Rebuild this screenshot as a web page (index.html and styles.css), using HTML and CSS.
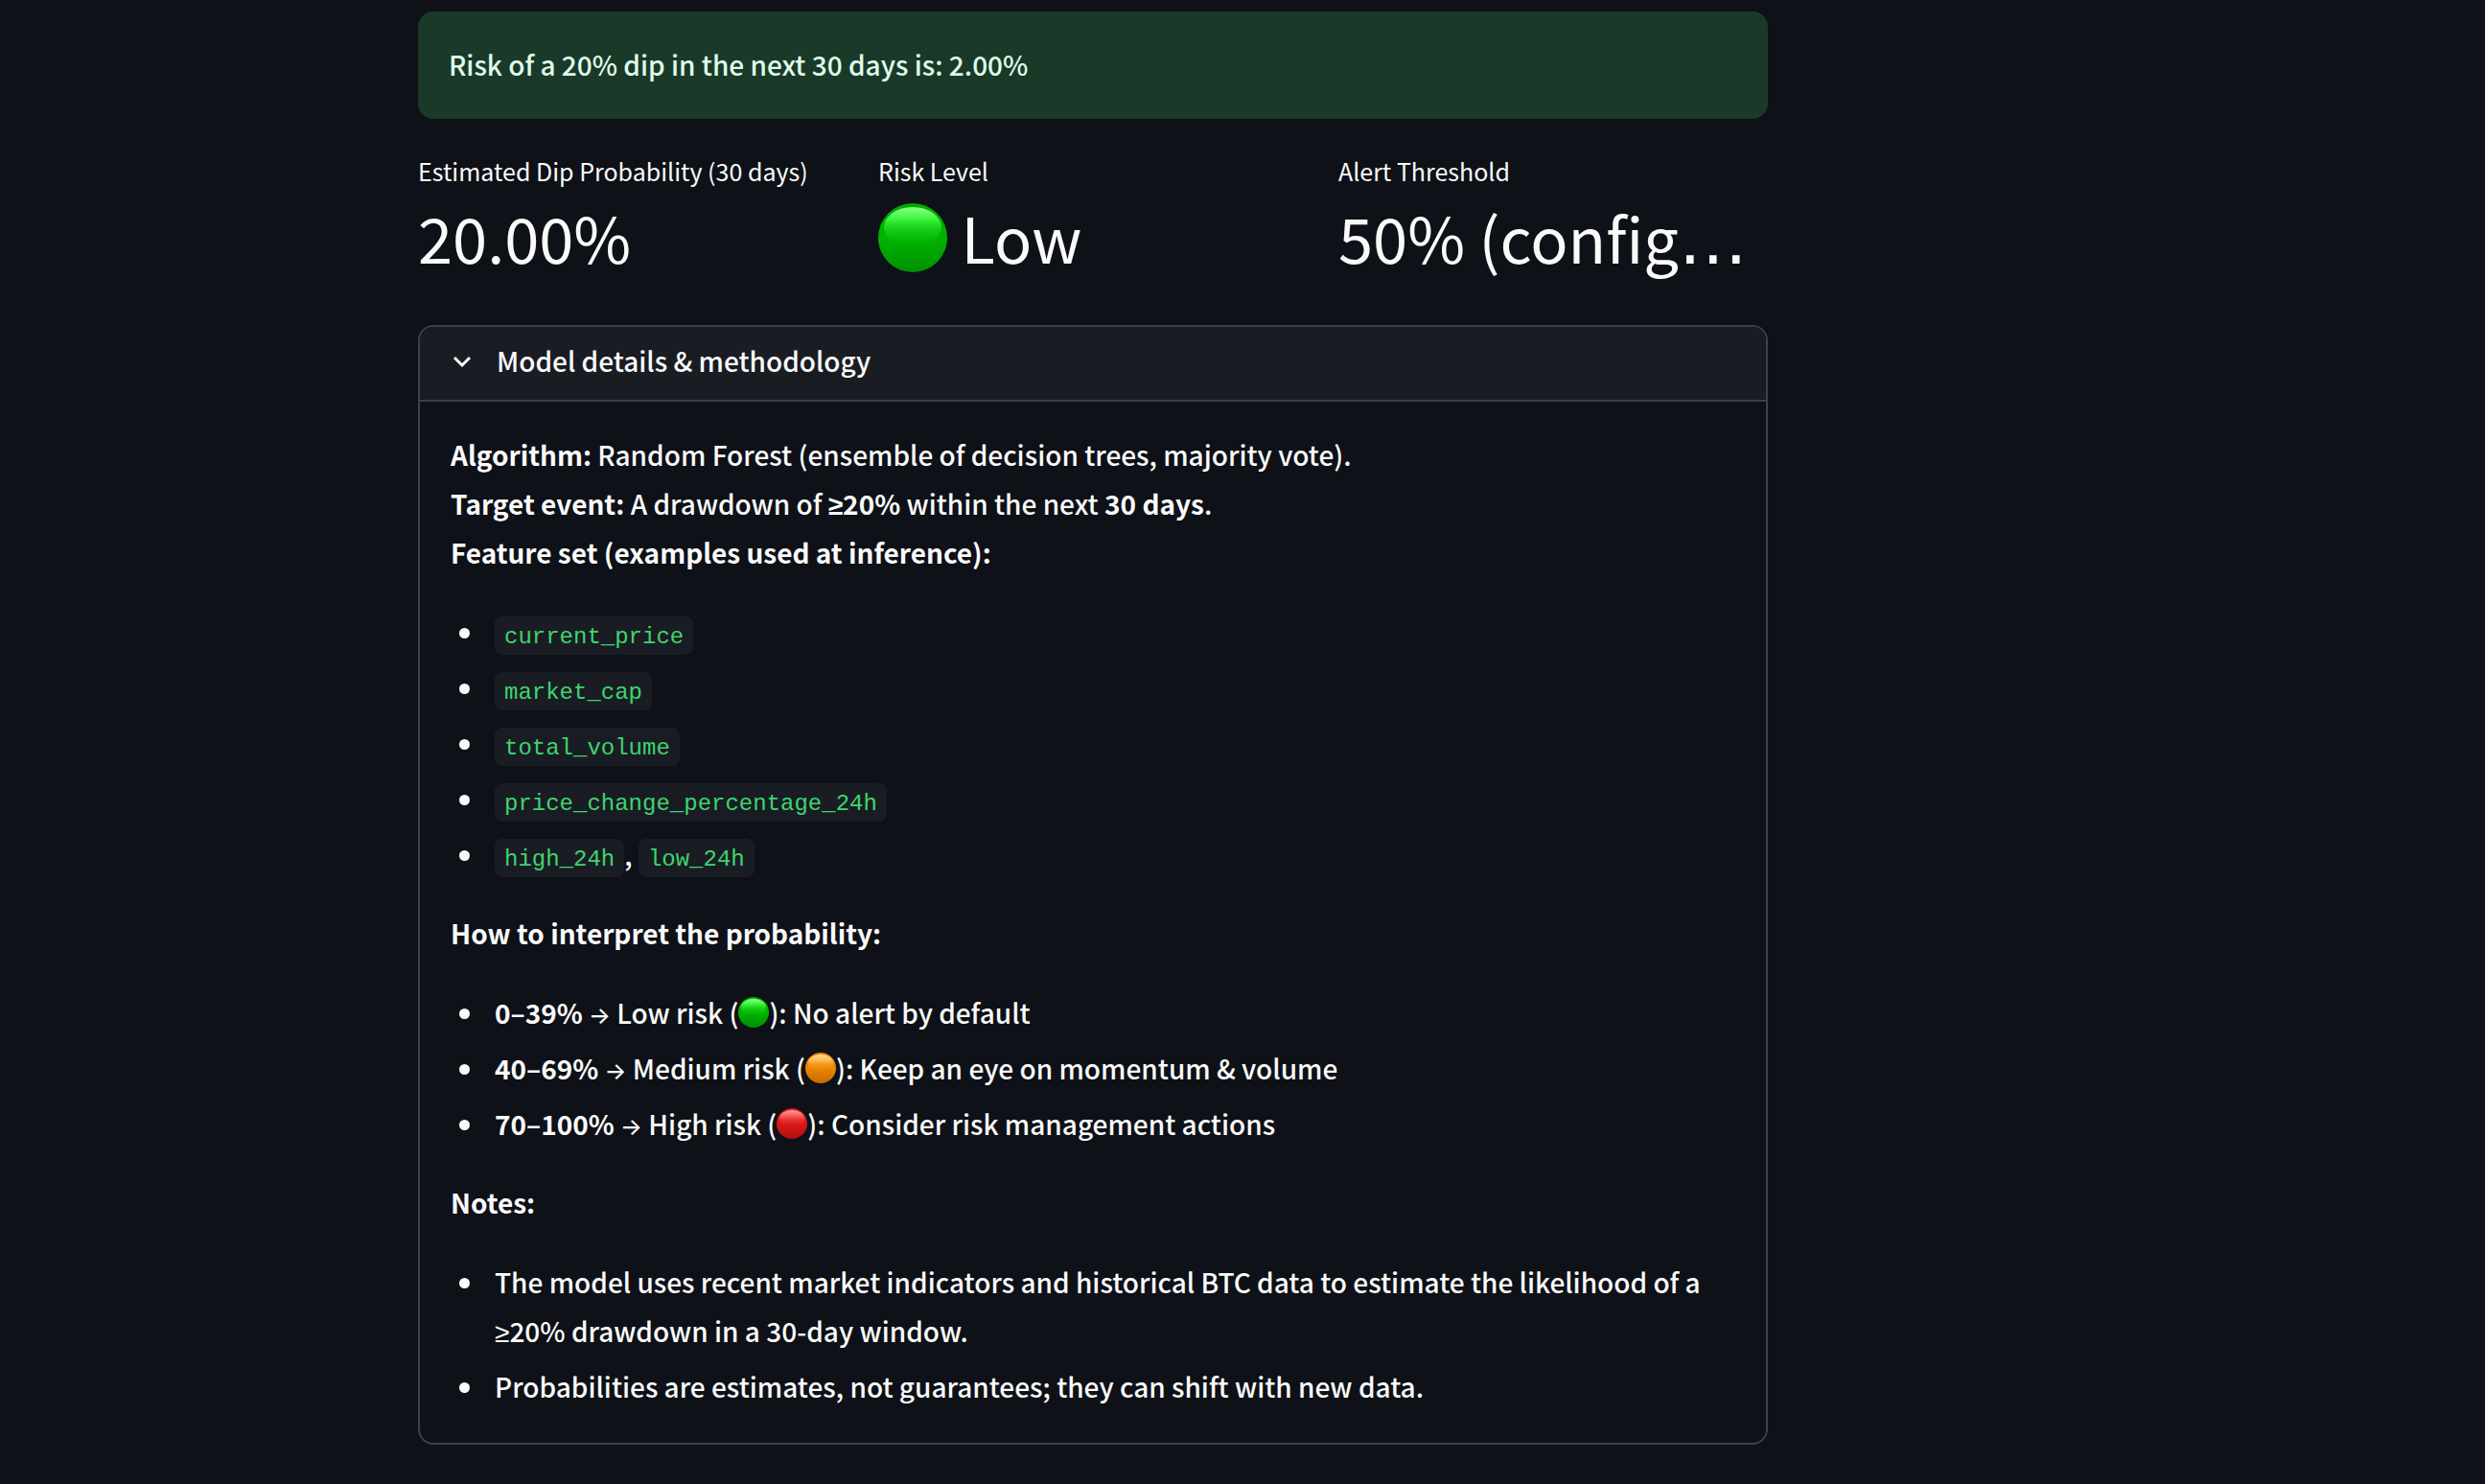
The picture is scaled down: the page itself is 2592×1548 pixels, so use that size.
FILE: index.html
```html
<!DOCTYPE html>
<html lang="en">
<head>
<meta charset="utf-8">
<title>BTC Dip Risk</title>
<meta name="viewport" content="width=device-width, initial-scale=1">
<link rel="stylesheet" href="styles.css">
</head>
<body>
<svg class="defs" aria-hidden="true">
  <defs>
    <linearGradient id="green-base" x1="0" y1="0" x2="0" y2="1"><stop offset="0" stop-color="#00a800"/><stop offset=".5" stop-color="#00b400"/><stop offset="1" stop-color="#008f00"/></linearGradient>
    <linearGradient id="green-shine" x1="0" y1="0" x2="0" y2="1"><stop offset="0" stop-color="#8cff8c"/><stop offset=".3" stop-color="#3cf53c"/><stop offset="1" stop-color="#00b400" stop-opacity="0"/></linearGradient>
    <linearGradient id="orange-base" x1="0" y1="0" x2="0" y2="1"><stop offset="0" stop-color="#e08200"/><stop offset=".5" stop-color="#ea8600"/><stop offset="1" stop-color="#cc6a00"/></linearGradient>
    <linearGradient id="orange-shine" x1="0" y1="0" x2="0" y2="1"><stop offset="0" stop-color="#ffd898"/><stop offset=".3" stop-color="#ffbc58"/><stop offset="1" stop-color="#ea8600" stop-opacity="0"/></linearGradient>
    <linearGradient id="red-base" x1="0" y1="0" x2="0" y2="1"><stop offset="0" stop-color="#c81414"/><stop offset=".5" stop-color="#dc1616"/><stop offset="1" stop-color="#b01010"/></linearGradient>
    <linearGradient id="red-shine" x1="0" y1="0" x2="0" y2="1"><stop offset="0" stop-color="#ff9c9c"/><stop offset=".3" stop-color="#fa6464"/><stop offset="1" stop-color="#dc1616" stop-opacity="0"/></linearGradient>
  </defs>
</svg>
<main class="page">
  <div class="block">
    <div class="alert" role="alert">Risk of a 20% dip in the next 30 days is: 2.00%</div>

    <section class="metrics">
      <div class="metric">
        <div class="metric-label">Estimated Dip Probability (30 days)</div>
        <div class="metric-value">20.00%</div>
      </div>
      <div class="metric">
        <div class="metric-label">Risk Level</div>
        <div class="metric-value"><svg class="dot dot-large" viewBox="0 0 72 72" role="img" aria-label="green"><circle cx="36" cy="36" r="36" fill="url(#green-base)"/><ellipse cx="36" cy="25" rx="30" ry="21" fill="url(#green-shine)"/></svg> Low</div>
      </div>
      <div class="metric">
        <div class="metric-label">Alert Threshold</div>
        <div class="metric-value">50% (config<span class="ellipsis">…</span></div>
      </div>
    </section>

    <details class="expander" open>
      <summary class="expander-head">
        <svg class="chevron" viewBox="0 0 24 24" aria-hidden="true"><path d="M4 8l8 8 8-8"/></svg>
        <span>Model details &amp; methodology</span>
      </summary>
      <div class="expander-body">
        <p><strong>Algorithm:</strong> Random Forest (ensemble of decision trees, majority vote).<br>
        <strong>Target event:</strong> A drawdown of <strong><span class="sign">≥</span>20%</strong> within the next <strong>30 days</strong>.<br>
        <strong>Feature set (examples used at inference):</strong></p>
        <ul>
          <li><code>current_price</code></li>
          <li><code>market_cap</code></li>
          <li><code>total_volume</code></li>
          <li><code>price_change_percentage_24h</code></li>
          <li><code>high_24h</code>, <code>low_24h</code></li>
        </ul>
        <p><strong>How to interpret the probability:</strong></p>
        <ul>
          <li><strong>0–39%</strong> <span class="arrow">→</span> Low risk (<svg class="dot" viewBox="0 0 72 72" role="img" aria-label="green"><circle cx="36" cy="36" r="36" fill="url(#green-base)"/><ellipse cx="36" cy="25" rx="30" ry="21" fill="url(#green-shine)"/></svg>): No alert by default</li>
          <li><strong>40–69%</strong> <span class="arrow">→</span> Medium risk (<svg class="dot" viewBox="0 0 72 72" role="img" aria-label="orange"><circle cx="36" cy="36" r="36" fill="url(#orange-base)"/><ellipse cx="36" cy="25" rx="30" ry="21" fill="url(#orange-shine)"/></svg>): Keep an eye on momentum &amp; volume</li>
          <li><strong>70–100%</strong> <span class="arrow">→</span> High risk (<svg class="dot" viewBox="0 0 72 72" role="img" aria-label="red"><circle cx="36" cy="36" r="36" fill="url(#red-base)"/><ellipse cx="36" cy="25" rx="30" ry="21" fill="url(#red-shine)"/></svg>): Consider risk management actions</li>
        </ul>
        <p><strong>Notes:</strong></p>
        <ul>
          <li>The model uses recent market indicators and historical BTC data to estimate the likelihood of a <span class="sign">≥</span>20% drawdown in a 30-day window.</li>
          <li>Probabilities are estimates, not guarantees; they can shift with new data.</li>
        </ul>
      </div>
    </details>
  </div>
</main>
</body>
</html>
```
FILE: styles.css
```css
* { box-sizing: border-box; }

body {
  margin: 0;
  background: #0e1117;
  color: #fafafa;
  font-family: "Noto Sans CJK KR", "Noto Sans", sans-serif;
  font-size: 28px;
  font-weight: 500;
  line-height: 51px;
}

.defs { position: absolute; width: 0; height: 0; }

.page {
  display: flex;
  justify-content: center;
  padding: 12px 312px 24px 0;
}

.block {
  display: flex;
  flex-direction: column;
  gap: 32px;
  flex: 1;
  min-width: 0;
  max-width: 1408px;
}

.alert {
  padding: 30px 32px 31px;
  border-radius: 16px;
  background: #1b3929;
  color: #dffde9;
}

.metrics {
  display: grid;
  grid-template-columns: repeat(3, minmax(0, 1fr));
  gap: 32px;
  padding-bottom: 13px;
  font-weight: 400;
}

.metric-label { font-size: 25px; line-height: 44px; }

.metric-value {
  font-size: 65px;
  line-height: 94px;
  white-space: nowrap;
}

.ellipsis { font-family: "DejaVu Sans", sans-serif; font-size: 72px; line-height: 1; }

.dot { width: 32px; height: 32px; vertical-align: -4px; }
.dot-large { width: 72px; height: 72px; vertical-align: -9px; }

.expander {
  overflow: hidden;
  border: 2px solid #3d4044;
  border-radius: 16px;
}

.expander-head {
  display: flex;
  align-items: center;
  gap: 24px;
  padding: 10px 32px 15px;
  border-bottom: 2px solid #3d4044;
  background: #1a1c24;
  cursor: pointer;
  list-style: none;
}

.chevron {
  width: 24px;
  height: 24px;
  fill: none;
  stroke: #fafafa;
  stroke-width: 3;
}

.expander-body { padding: 30px 32px 33px; }

.expander-body p { margin: 0 0 32px; }

.expander-body ul {
  display: grid;
  gap: 7px;
  margin: 0 0 31px;
  padding-left: 46px;
  list-style: none;
}

.expander-body ul:last-child { margin-bottom: 0; }

.expander-body li::before {
  content: "";
  display: inline-block;
  width: 11px;
  height: 11px;
  margin: 0 26px 0 -37px;
  border-radius: 50%;
  background: #fafafa;
  vertical-align: 5px;
}

strong { font-weight: 700; }

code {
  display: inline-block;
  padding: 6px 10px 2px;
  border-radius: 8px;
  background: #1a1c24;
  color: #3dd56d;
  font-family: "Liberation Mono", monospace;
  font-size: 24px;
  font-weight: 400;
  line-height: 32px;
}

.arrow { font-family: Inter, sans-serif; font-size: 24px; line-height: 1; }
.sign { font-family: "Noto Sans", sans-serif; font-size: 28px; line-height: 1; }
```
